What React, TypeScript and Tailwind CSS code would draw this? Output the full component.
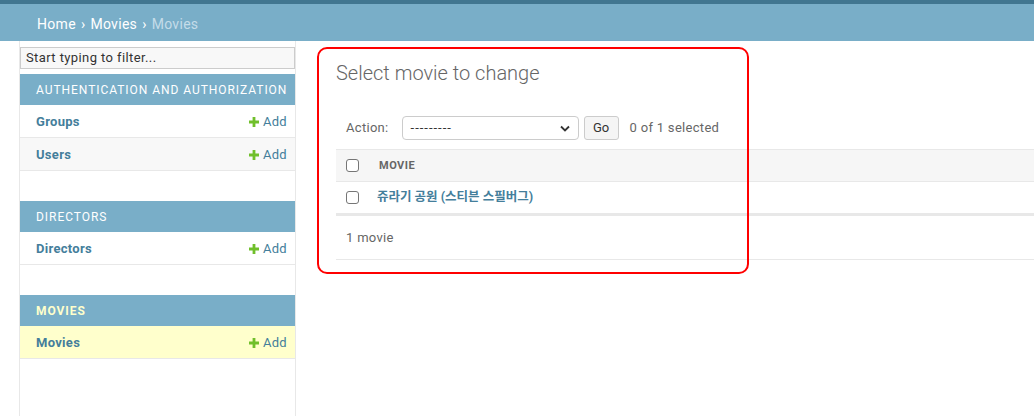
import React from 'react'

const font = { fontFamily: 'Roboto, "Noto Sans CJK KR", sans-serif' }

function AddLink() {
  return (
    <span className="flex items-center gap-[4px] text-[13px] tracking-[0.3px] text-[#447e9b]">
      <svg width="10" height="10" viewBox="0 0 10 10">
        <path d="M3.6 0h2.8v3.6H10v2.8H6.4V10H3.6V6.4H0V3.6h3.6z" fill="#70bf2b" />
      </svg>
      Add
    </span>
  )
}

const sections = [
  { caption: 'AUTHENTICATION AND AUTHORIZATION', models: ['Groups', 'Users'], current: false },
  { caption: 'DIRECTORS', models: ['Directors'], current: false },
  { caption: 'MOVIES', models: ['Movies'], current: true },
]

function Checkbox() {
  return <span className="block w-[13px] h-[13px] border border-[#767676] rounded-[3px] bg-white" />
}

export default function App() {
  return (
    <div className="w-[1034px] h-[416px] overflow-hidden bg-white text-[#333]" style={font}>
      <div className="h-[4px] bg-[#417690]" />
      <div className="h-[37px] bg-[#79aec8] px-[37px] pt-[3px] flex items-center text-[14px] tracking-[0.3px] text-white">
        <span>Home</span>
        <span className="mx-[5px]">›</span>
        <span>Movies</span>
        <span className="mx-[5px]">›</span>
        <span className="text-[#c4dce8]">Movies</span>
      </div>

      <div className="flex h-[375px]">
        <div className="w-[20px] border-r border-[#e8e8e8]" />

        {/* sidebar */}
        <nav className="w-[276px] border-r border-[#e8e8e8] flex flex-col">
          <div className="mt-[6px] mb-[5px] h-[22px] border border-[#cccccc] bg-[#f8f8f8] flex items-center px-[5px] text-[13px] tracking-[0.4px] text-[#333]">
            Start typing to filter...
          </div>
          {sections.map((s) => (
            <div key={s.caption} className="mb-[30px]">
              <div
                className={`h-[31px] bg-[#79aec8] px-[16px] flex items-center whitespace-nowrap text-[12px] tracking-[0.95px] ${
                  s.current ? 'text-[#ffffcc] font-bold' : 'text-white'
                }`}
              >
                {s.caption}
              </div>
              {s.models.map((m, i) => (
                <div
                  key={m}
                  className={`h-[33px] border-b border-[#e8e8e8] pl-[16px] pr-[8px] pt-[1px] flex items-center justify-between ${
                    s.current ? 'bg-[#ffffcc]' : i % 2 === 1 ? 'bg-[#f8f8f8]' : 'bg-white'
                  }`}
                >
                  <span className="text-[13px] font-bold tracking-[0.3px] text-[#447e9b]">{m}</span>
                  <AddLink />
                </div>
              ))}
            </div>
          ))}
        </nav>

        {/* content */}
        <main className="relative flex-1 pl-[40px] pt-[20px]">
          <h1 className="text-[20px] font-light text-[#666] leading-[24px]">Select movie to change</h1>

          <div className="mt-[30px] flex items-center h-[26px] px-[10px] text-[13px] text-[#666]">
            <span className="tracking-[0.3px]">Action:</span>
            <div className="ml-[13px] w-[177px] h-[24px] border border-[#cccccc] rounded-[4px] bg-white flex items-center justify-between px-[8px] text-[#333]">
              <span className="tracking-[1px]">---------</span>
              <svg width="10" height="7" viewBox="0 0 10 7">
                <path d="M1 1.5l4 4 4-4" fill="none" stroke="#333" strokeWidth="1.8" />
              </svg>
            </div>
            <div className="ml-[5px] h-[24px] w-[35px] border border-[#cccccc] rounded-[3px] bg-[#f5f5f5] flex items-center justify-center text-[13px] text-[#333]">
              Go
            </div>
            <span className="ml-[11px] tracking-[0.3px]">0 of 1 selected</span>
          </div>

          <div className="mt-[8px]">
            <div className="h-[33px] bg-[#f6f6f6] border-y border-[#e8e8e8] flex items-center px-[10px]">
              <Checkbox />
              <span className="ml-[20px] pt-[2px] text-[11px] font-bold text-[#666] tracking-[0.5px]">MOVIE</span>
            </div>
            <div className="h-[34px] border-b-[3px] border-[#e8e8e8] flex items-center px-[10px]">
              <Checkbox />
              <span className="ml-[18px] text-[12.5px] font-bold text-[#447e9b]">쥬라기 공원 (스티븐 스필버그)</span>
            </div>
            <div className="h-[44px] border-b border-[#e8e8e8] flex items-center px-[10px] text-[13px] tracking-[0.3px] text-[#666]">
              1 movie
            </div>
          </div>

          {/* annotation box */}
          <div className="absolute left-[21px] top-[6px] w-[432px] h-[227px] border-2 border-[#ff0000] rounded-[10px]" />
        </main>
      </div>
    </div>
  )
}
